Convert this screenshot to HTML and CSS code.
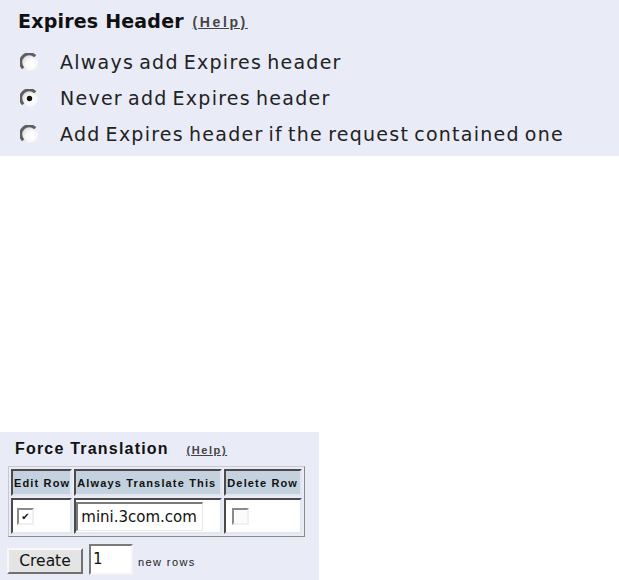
FILE: index.html
```html
<!DOCTYPE html>
<html>
<head>
<meta charset="utf-8">
<link rel="stylesheet" href="styles.css">
</head>
<body>
<div class="panel expires">
  <div class="title">Expires Header <a class="help" href="#">(Help)</a></div>
  <div class="opt">
    <svg class="radio" width="19" height="19" viewBox="0 0 19 19"><defs><radialGradient id="g1" cx="0.62" cy="0.62" r="0.62"><stop offset="0" stop-color="#ffffff"/><stop offset="0.6" stop-color="#f6f6f6"/><stop offset="1" stop-color="#d8d8d8"/></radialGradient></defs><circle cx="9.5" cy="9.5" r="8.5" fill="url(#g1)"/><path d="M3.2 15.2 A8 8 0 0 1 15.2 3.2" fill="none" stroke="#5e5e5e" stroke-width="3"/></svg>
    <span>Always add Expires header</span>
  </div>
  <div class="opt">
    <svg class="radio" width="19" height="19" viewBox="0 0 19 19"><circle cx="9.5" cy="9.5" r="8.5" fill="url(#g1)"/><path d="M3.2 15.2 A8 8 0 0 1 15.2 3.2" fill="none" stroke="#5e5e5e" stroke-width="3"/><circle cx="9.5" cy="9.5" r="2.7" fill="#111"/></svg>
    <span>Never add Expires header</span>
  </div>
  <div class="opt">
    <svg class="radio" width="19" height="19" viewBox="0 0 19 19"><circle cx="9.5" cy="9.5" r="8.5" fill="url(#g1)"/><path d="M3.2 15.2 A8 8 0 0 1 15.2 3.2" fill="none" stroke="#5e5e5e" stroke-width="3"/></svg>
    <span>Add Expires header if the request contained one</span>
  </div>
</div>

<div class="panel force">
  <div class="ftitle">Force Translation <a class="fhelp" href="#">(Help)</a></div>
  <table class="grid">
    <tr>
      <th class="w1">Edit Row</th>
      <th class="w2">Always Translate This</th>
      <th class="w3">Delete Row</th>
    </tr>
    <tr>
      <td class="c1"><span class="cb">&#10004;</span></td>
      <td class="c2"><span class="tinput">mini.3com.com</span></td>
      <td class="c3"><span class="cb off"></span></td>
    </tr>
  </table>
  <div class="actions">
    <span class="btn">Create</span>
    <span class="num">1</span>
    <span class="newrows">new rows</span>
  </div>
</div>
</body>
</html>
```

FILE: styles.css
```css
html, body {
  margin: 0;
  padding: 0;
  background: #ffffff;
}
body {
  width: 619px;
  height: 580px;
  overflow: hidden;
  font-family: "DejaVu Sans", sans-serif;
  color: #222;
}
.panel {
  background: #e9ebf7;
}
.expires {
  width: 619px;
  height: 156px;
  box-sizing: border-box;
  padding: 10px 0 0 18px;
}
.title {
  font-weight: bold;
  font-size: 19px;
  letter-spacing: 0.2px;
  color: #111;
  height: 34px;
  line-height: 22px;
}
.help {
  font-family: "Liberation Sans", sans-serif;
  font-size: 14px;
  letter-spacing: 2.6px;
  color: #444;
  text-decoration: underline;
  margin-left: 2px;
  position: relative;
  top: -1px;
}
.opt {
  display: flex;
  align-items: center;
  height: 36px;
  font-size: 19px;
  color: #222;
  letter-spacing: 1.25px;
  word-spacing: -2.2px;
}
.radio {
  margin-left: 2px;
  margin-right: 21px;
  flex: none;
}
.force {
  margin-top: 276px;
  width: 319px;
  height: 148px;
  box-sizing: border-box;
  padding: 8px 0 0 8px;
}
.ftitle {
  font-family: "Liberation Sans", sans-serif;
  font-weight: bold;
  font-size: 16px;
  letter-spacing: 1.2px;
  color: #111;
  padding-left: 7px;
  height: 26px;
  line-height: 18px;
}
.fhelp {
  font-size: 11px;
  letter-spacing: 1.6px;
  color: #444;
  text-decoration: underline;
  margin-left: 12px;
}
.grid {
  border: 1px solid;
  border-color: #c8c8d0 #8a8a8a #8a8a8a #c8c8d0;
  border-spacing: 2px;
  background: #e9ebf7;
}
.grid th {
  box-sizing: border-box;
  background: #c3d2de;
  border: 2px solid;
  border-color: #4a4a4a #e2e6ee #e2e6ee #4a4a4a;
  font-family: "Liberation Sans", sans-serif;
  font-size: 11px;
  letter-spacing: 1.15px;
  font-weight: bold;
  color: #111;
  padding: 0 0 0 1px;
  height: 27px;
  white-space: nowrap;
  text-align: left;
}
.w1 { width: 59px; }
.w2 { width: 148px; }
.w3 { width: 78px; }
.grid td {
  box-sizing: border-box;
  background: #ffffff;
  border: 2px solid;
  border-color: #4a4a4a #e2e6ee #e2e6ee #4a4a4a;
  height: 36px;
  padding: 0;
  vertical-align: middle;
}
.c1 { padding-left: 4px !important; }
.c3 { padding-left: 6px !important; }
.cb {
  display: block;
  width: 13px;
  height: 13px;
  border: 2px solid;
  border-color: #8a8a8a #f0f0f0 #f0f0f0 #8a8a8a;
  background: #fff;
  font-size: 10px;
  line-height: 13px;
  text-align: center;
  color: #111;
}
.cb.off {
  background: #fbfbfb;
}
.tinput {
  display: block;
  width: 121px;
  height: 26px;
  margin: 1px 0 1px 0;
  border-style: solid;
  border-color: #7a7a7a #e8e8e8 #e8e8e8 #7a7a7a;
  border-width: 2px 1px 1px 2px;
  font-size: 15px;
  line-height: 27px;
  color: #111;
  padding-left: 3px;
}
.actions {
  display: flex;
  align-items: center;
  margin-top: 7px;
  margin-left: -1px;
}
.btn {
  display: inline-block;
  width: 72px;
  height: 22px;
  margin-top: 3px;
  background: #e4e4e4;
  border: 2px solid;
  border-color: #f8f8f8 #707070 #707070 #f8f8f8;
  font-size: 15.5px;
  line-height: 22px;
  text-align: center;
  color: #111;
}
.num {
  display: inline-block;
  width: 38px;
  height: 27px;
  margin-left: 6px;
  background: #fff;
  border: 2px solid;
  border-color: #7a7a7a #f4f4f4 #f4f4f4 #7a7a7a;
  font-size: 15px;
  line-height: 27px;
  padding-left: 2px;
  color: #111;
}
.newrows {
  font-family: "Liberation Sans", sans-serif;
  font-size: 11px;
  letter-spacing: 1.4px;
  color: #222;
  margin-left: 5px;
  margin-top: 5px;
}
```
